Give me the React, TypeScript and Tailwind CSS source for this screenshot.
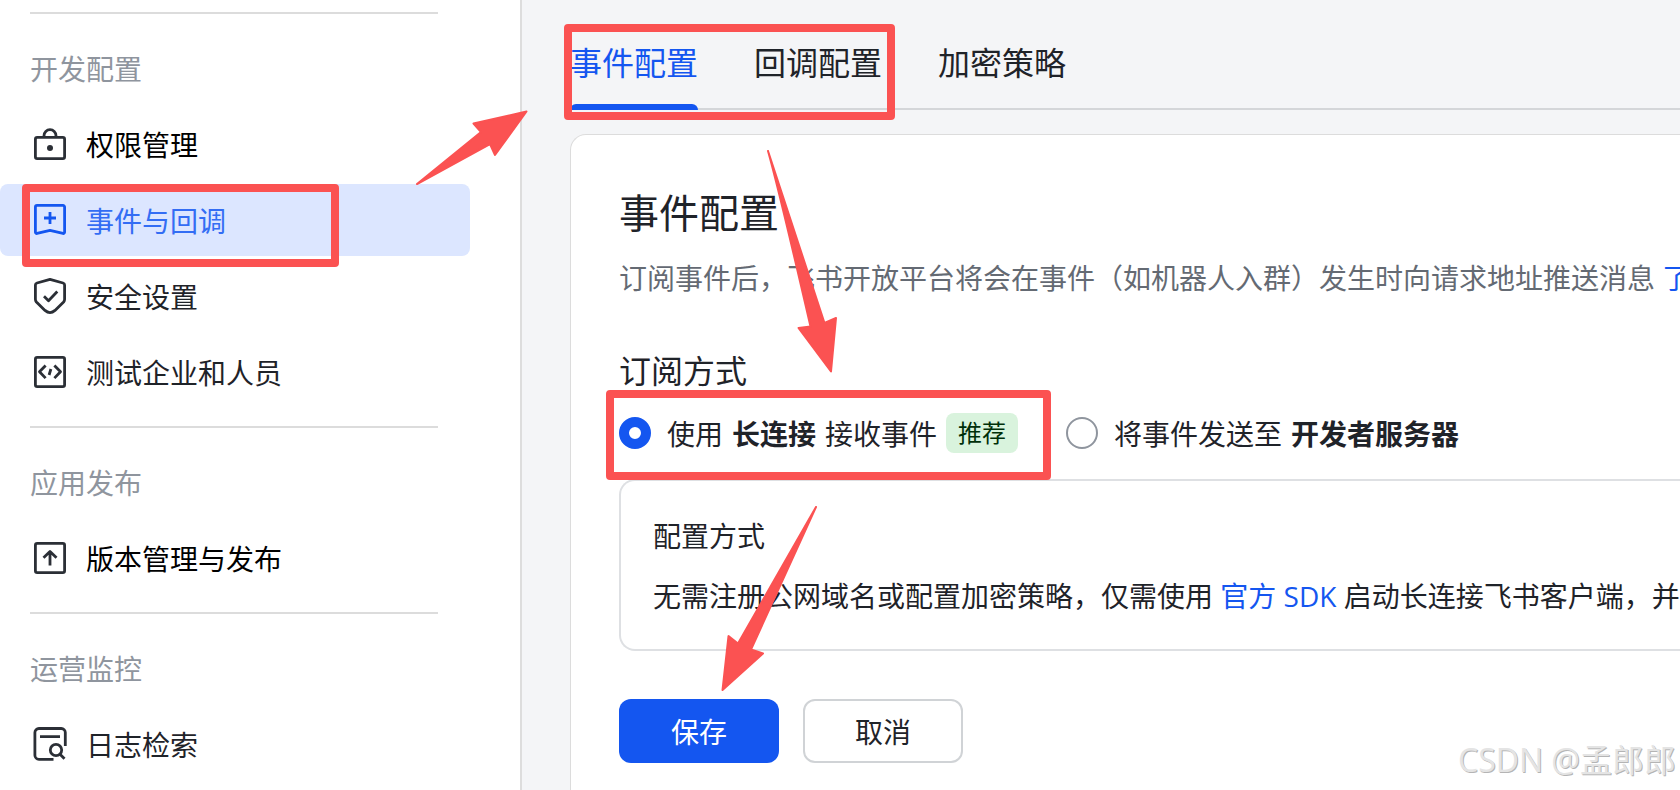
import React, { useState } from 'react';
import clsx from 'clsx';

interface NavItem {
  label: string;
  icon: React.ReactNode;
  tone?: string;
  active?: boolean;
}

interface NavSection {
  title: string;
  items: NavItem[];
}

function Icon({ children }: { children: React.ReactNode }) {
  return (
    <svg
      viewBox="0 0 40 40"
      className="w-10 h-10 shrink-0"
      fill="none"
      stroke="currentColor"
      strokeWidth="2.8"
      strokeLinejoin="round"
      aria-hidden="true"
    >
      {children}
    </svg>
  );
}

const LockIcon = () => (
  <Icon>
    <rect x="5.4" y="13.4" width="29.2" height="21.2" rx="1.8" />
    <path d="M14 13v-1.3a6 6 0 0 1 12 0V13" />
    <circle cx="20" cy="24" r="3" fill="currentColor" stroke="none" />
  </Icon>
);

const BookmarkPlusIcon = () => (
  <Icon>
    <path d="M7 5.4h26a1.6 1.6 0 0 1 1.6 1.6v25.2a1.2 1.2 0 0 1-1.6 1.2L20 30.4 7 33.4a1.2 1.2 0 0 1-1.6-1.2V7A1.6 1.6 0 0 1 7 5.4z" />
    <path d="M20 12v12M14 18h12" />
  </Icon>
);

const ShieldCheckIcon = () => (
  <Icon>
    <path d="M20 3.4 33 7q1.6.5 1.6 2v14.2q0 1.6-1 2.8L25 34.4q-5 4.4-10 0L6.4 26q-1-1.2-1-2.8V9q0-1.5 1.6-2z" />
    <path d="m14 20.3 4.5 4.4 8.800-9.200" />
  </Icon>
);

const CodeIcon = () => (
  <Icon>
    <rect x="5.4" y="5.4" width="29.2" height="29.2" rx="1.8" />
    <path d="m15.6 13.5-6.1 6.3 6.1 6.3M24.4 13.5l6.1 6.3-6.1 6.3M20.9 17l-1.8 6" />
  </Icon>
);

const UploadIcon = () => (
  <Icon>
    <rect x="5.4" y="5.4" width="29.2" height="29.2" rx="1.8" />
    <path d="M20 14v13.6M13.5 19.8l6.5-6.3 6.5 6.3" />
  </Icon>
);

const LogSearchIcon = () => (
  <Icon>
    <path d="M35.3 22V8.500a4 4 0 0 0-4-4H8.900a4 4 0 0 0-4 4v22.800a4 4 0 0 0 4 4H23.500M10 12.700h20" />
    <circle cx="26" cy="26" r="5.7" />
    <path d="m30 30.2 4.5 4.6" />
  </Icon>
);

const sections: NavSection[] = [
  {
    title: '开发配置',
    items: [
      { label: '权限管理', icon: <LockIcon />, tone: 'text-black' },
      { label: '事件与回调', icon: <BookmarkPlusIcon />, active: true },
      { label: '安全设置', icon: <ShieldCheckIcon /> },
      { label: '测试企业和人员', icon: <CodeIcon /> },
    ],
  },
  {
    title: '应用发布',
    items: [{ label: '版本管理与发布', icon: <UploadIcon />, tone: 'text-black' }],
  },
  {
    title: '运营监控',
    items: [{ label: '日志检索', icon: <LogSearchIcon /> }],
  },
];

const tabs = ['事件配置', '回调配置', '加密策略'];

function Sidebar() {
  return (
    <aside className="w-[522px] shrink-0 bg-white border-r-2 border-[#dddddd] pt-3">
      <nav>
        {sections.map((section) => (
          <section key={section.title} className="pb-[18px]">
            <hr className="ml-[30px] mr-[82px] border-0 h-0.5 bg-[#dcdcdc]" />
            <h2 className="pt-[35px] pb-[19px] pl-[30px] leading-10 text-[#8f959e]">{section.title}</h2>
            <ul className="flex flex-col gap-1 mr-[50px]">
              {section.items.map((item) => (
                <li key={item.label}>
                  <a
                    href="#"
                    aria-current={item.active ? 'page' : undefined}
                    className={clsx(
                      'flex items-center gap-4 h-[72px] pl-[30px] rounded-lg',
                      item.active ? 'bg-[#dce6ff] text-[#1456f0]' : 'text-[#2b2f36]'
                    )}
                  >
                    {item.icon}
                    <span className={clsx('pt-0.5', item.active ? 'text-[#336df4]' : item.tone ?? 'text-[#1f2329]')}>
                      {item.label}
                    </span>
                  </a>
                </li>
              ))}
            </ul>
          </section>
        ))}
      </nav>
    </aside>
  );
}

function RadioOption({ id, checked, onSelect, children }: {
  id: string;
  checked: boolean;
  onSelect: (id: string) => void;
  children: React.ReactNode;
}) {
  return (
    <label htmlFor={id} className="flex items-center gap-4 h-10 shrink-0">
      <input
        id={id}
        type="radio"
        name="subscribe"
        checked={checked}
        onChange={() => onSelect(id)}
        className="appearance-none w-8 h-8 shrink-0 rounded-full bg-white border-2 border-[#8f959e] checked:border-[10px] checked:border-[#1456f0]"
      />
      <span className="flex items-center gap-[9px]">{children}</span>
    </label>
  );
}

/* Red frames and arrows drawn over the page as a walkthrough */
function Annotations() {
  return (
    <div className="absolute inset-0 pointer-events-none" aria-hidden="true">
      <div className="absolute left-[22px] top-[184px] w-[317px] h-[83px] border-8 border-[#fb5252] rounded" />
      <div className="absolute left-[564px] top-6 w-[331px] h-24 border-8 border-[#fb5252] rounded" />
      <div className="absolute left-[606px] top-[390px] w-[445px] h-[90px] border-8 border-[#fb5252] rounded" />
      <svg
        className="absolute left-0 top-0 w-[1680px] h-[790px]"
        viewBox="0 0 1680 790"
        fill="#fb5252"
        stroke="#fb5252"
        strokeWidth="2"
        strokeLinejoin="round"
      >
        <path d="M417 184 481 132 473.5 123.5 526.5 111.5 495 155 490 144z" />
        <path d="M768 151Q779 190 810.500 326.500L798.500 328 831 371.500 836 318 824.500 323Q786 205 768 151z" />
        <path d="M816 507 738 643.5 728.5 636 722.500 690 763 653.5 751 649.5z" />
      </svg>
    </div>
  );
}

export default function App() {
  const [tab, setTab] = useState(tabs[0]);
  const [mode, setMode] = useState('long-connection');

  return (
    <div className="relative flex min-h-screen overflow-hidden bg-[#f4f5f7] text-[28px] leading-10 text-[#1f2329] whitespace-nowrap font-['Open_Sans','Noto_Sans_CJK_SC',sans-serif]">
      <Sidebar />

      <main className="flex-1 min-w-0 flex flex-col pl-12">
        <div role="tablist" className="flex gap-14 h-[110px] border-b-2 border-[#d4d6d9] text-[32px]">
          {tabs.map((name) => (
            <button
              key={name}
              type="button"
              role="tab"
              aria-selected={tab === name}
              onClick={() => setTab(name)}
              className={clsx('h-[110px] flex flex-col justify-between pt-[43px]', tab === name && 'text-[#1456f0]')}
            >
              {name}
              {tab === name && <span className="w-full h-1.5 rounded-t-md bg-[#1456f0]" />}
            </button>
          ))}
        </div>

        <div className="flex-1 mt-6 pt-[50px] pl-12 bg-white border-t border-l border-[#dcdcdc] rounded-tl-2xl overflow-hidden">
          <h1 className="text-[40px] leading-[56px]">事件配置</h1>
          <p className="mt-[17px] text-[#646a73]">
            订阅事件后，飞书开放平台将会在事件（如机器人入群）发生时向请求地址推送消息{' '}
            <a href="#" className="text-[#1456f0]">了解更多</a>
          </p>

          <h2 className="mt-[53px] text-[32px]">订阅方式</h2>
          <div className="flex gap-12 mt-[22px]">
            <RadioOption id="long-connection" checked={mode === 'long-connection'} onSelect={setMode}>
              <span className="pt-0.5">使用</span>
              <b className="pt-0.5">长连接</b>
              <span className="pt-0.5">接收事件</span>
              <span className="px-3 rounded-lg bg-[#d9f3dd] text-2xl leading-10 text-[#002f09]">推荐</span>
            </RadioOption>
            <RadioOption id="dev-server" checked={mode === 'dev-server'} onSelect={setMode}>
              <span className="pt-0.5">将事件发送至</span>
              <b className="pt-0.5">开发者服务器</b>
            </RadioOption>
          </div>

          <div className="mt-[26px] border-2 border-r-0 border-[#dee0e3] rounded-l-2xl px-8 pt-[35px] pb-[33px] flex flex-col gap-5">
            <h3>配置方式</h3>
            <p>
              无需注册公网域名或配置加密策略，仅需使用 <a href="#" className="text-[#1456f0]">官方 SDK</a> 启动长连接飞书客户端，并
            </p>
          </div>

          <div className="flex gap-6 mt-12">
            <button type="button" className="w-40 h-16 pt-0.5 rounded-xl bg-[#1456f0] text-white">保存</button>
            <button type="button" className="w-40 h-16 pt-0.5 rounded-xl bg-white border-2 border-[#d0d3d6]">取消</button>
          </div>
        </div>
      </main>

      <Annotations />

      <div className="absolute right-1 bottom-4 text-[32px] leading-[44px] text-[#e4e4e4] [text-shadow:1px_1px_0_#b4b4b4]">
        CSDN @孟郎郎
      </div>
    </div>
  );
}
